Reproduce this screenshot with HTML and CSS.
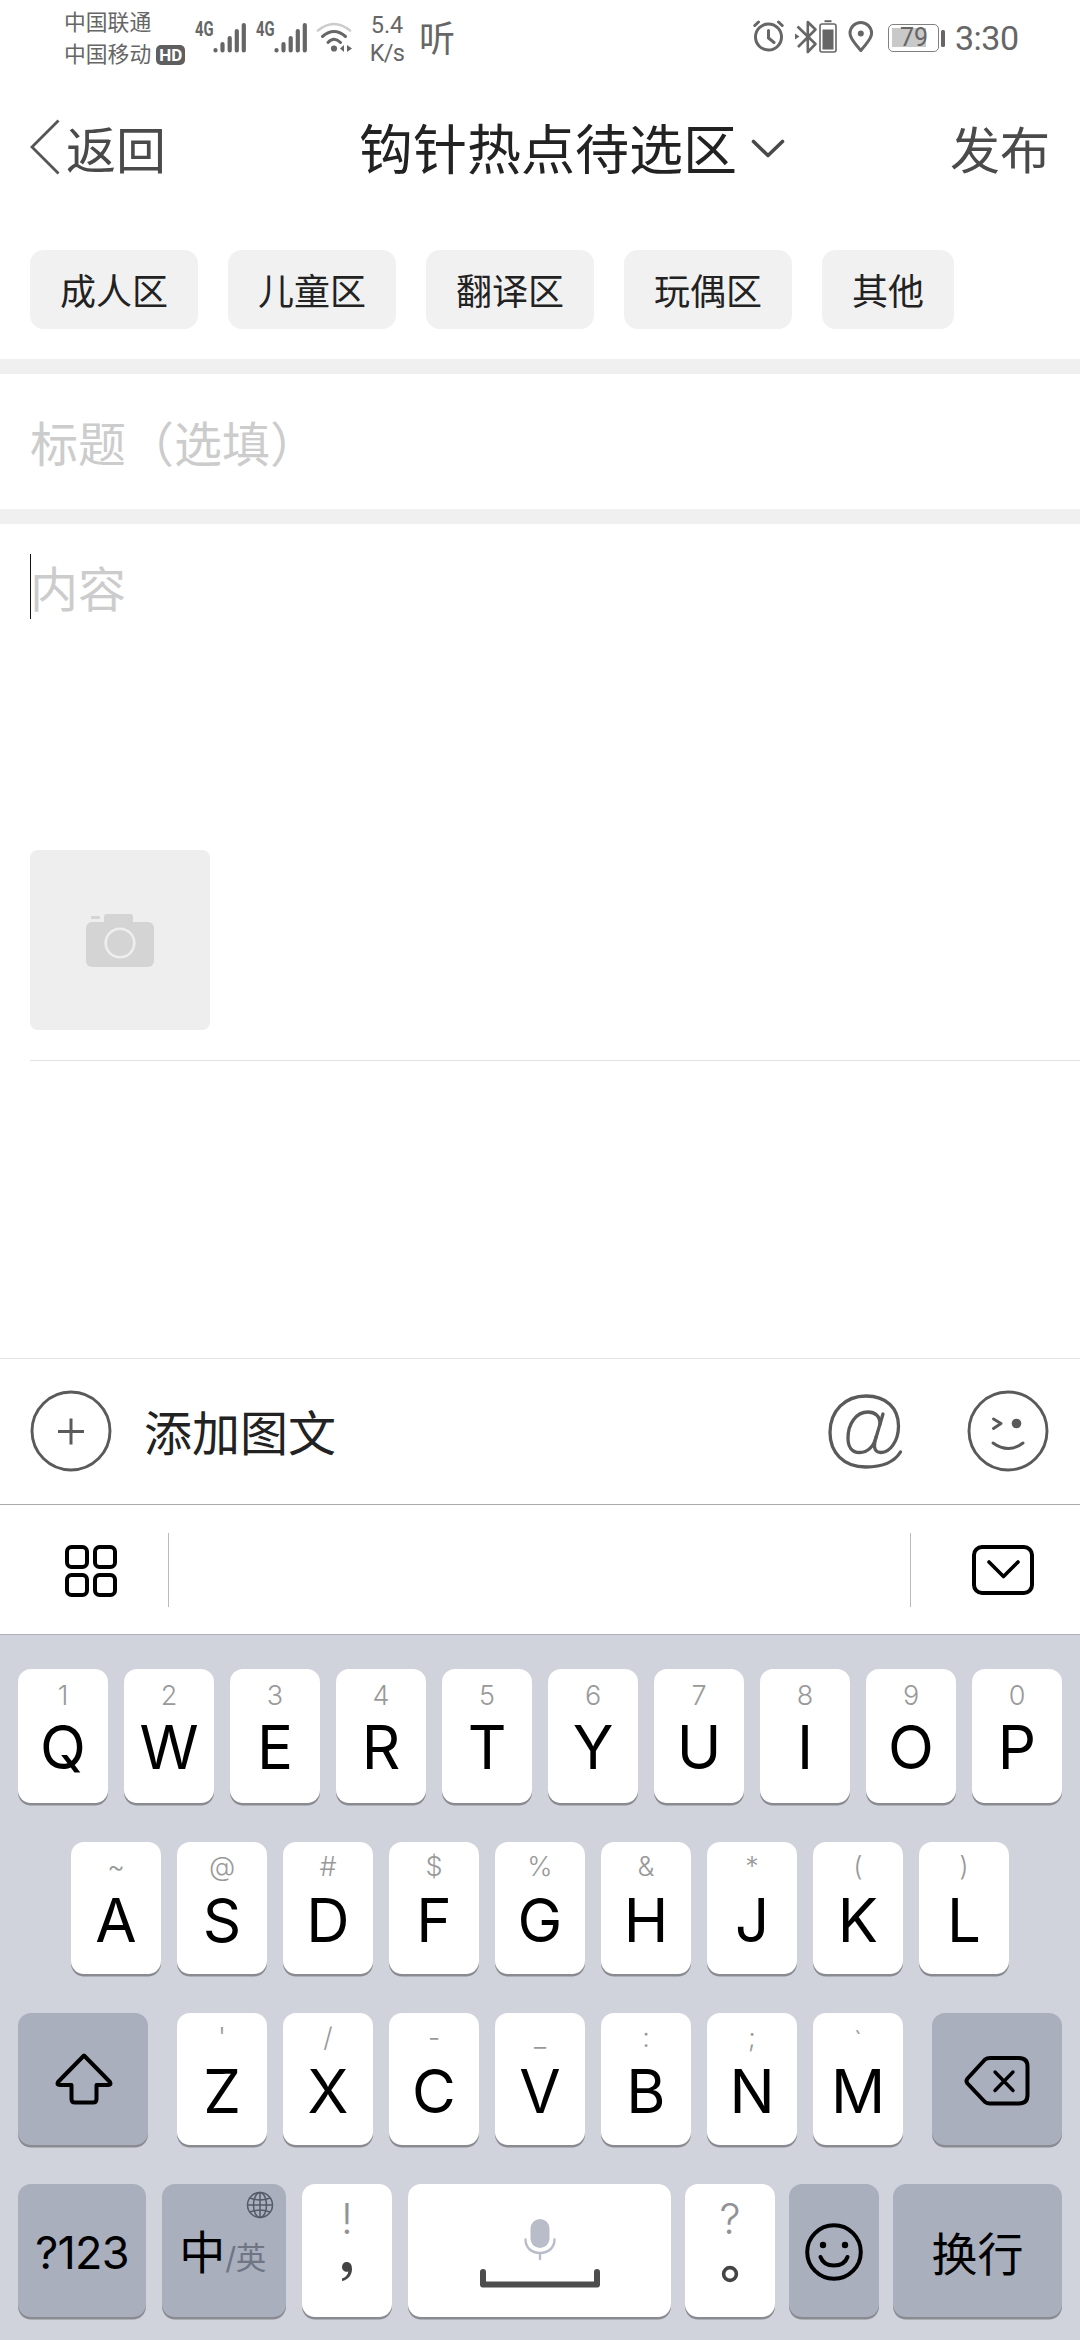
FILE: index.html
```html
<!DOCTYPE html>
<html lang="zh-CN">
<head>
<meta charset="utf-8">
<title>发布</title>
<link rel="stylesheet" href="styles.css">
</head>
<body>
<div class="screen">
  <div class="status">
    <div class="carriers">
      <div class="carrier">中国联通</div>
      <div class="carrier">中国移动<span class="hd">HD</span></div>
    </div>
    <div class="signal">
      <span class="gen">4G</span>
      <svg width="34" height="32" viewBox="0 0 34 32" stroke="#666" stroke-width="4.2" stroke-linecap="round"><path d="M2.5 28v.5M9.5 22v6.5M16.7 16v12.5M23.8 9v19.5M30.8 3v25.5"/></svg>
    </div>
    <div class="signal">
      <span class="gen">4G</span>
      <svg width="34" height="32" viewBox="0 0 34 32" stroke="#666" stroke-width="4.2" stroke-linecap="round"><path d="M2.5 28v.5M9.5 22v6.5M16.7 16v12.5M23.8 9v19.5M30.8 3v25.5"/></svg>
    </div>
    <svg class="wifi" width="38" height="32" viewBox="0 0 38 32" fill="none" stroke="#666" stroke-width="3" stroke-linecap="round">
      <path d="M2 8.500Q18 -4.500 34 8.500" stroke="#ccc" stroke-width="2.600"/>
      <path d="M6.500 14.500Q18 4.500 29.500 14.500M12 20.500Q18 14 24.500 20.500"/>
      <circle cx="18" cy="26.500" r="3.100" fill="#666" stroke="none"/>
      <path d="M24 26.500l4-3.500v7zM31 23v7l5-3.500z" fill="#666" stroke="none"/>
    </svg>
    <div class="speed"><div>5.4</div><div class="unit">K/s</div></div>
    <div class="listen">听</div>
    <svg class="alarm" width="32" height="32" viewBox="0 0 32 32" fill="none" stroke="#666" stroke-width="3" stroke-linecap="round">
      <circle cx="15.500" cy="17" r="13"/><path d="M15.500 10.500v7.500l5.500 4.500M1.800 5.500l3.700-3.500M29.200 5.500l-3.700-3.500"/>
    </svg>
    <svg class="bt" width="42" height="34" viewBox="0 0 42 34" fill="none" stroke="#666" stroke-width="2.600" stroke-linejoin="round">
      <path d="M2.500 6.500l18 17.500-7.700 8V2l7.700 7.500L3 27"/><path d="M0 13.500l4.500 3-4.500 3z" fill="#666" stroke="none"/>
      <rect x="25" y="4" width="16" height="28" rx="2" stroke-width="1.600"/><rect x="27.500" y="9.500" width="11" height="20" fill="#666" stroke="none"/><path d="M29.500 1.200h7" stroke-width="2"/>
    </svg>
    <svg class="pin" width="26" height="32" viewBox="0 0 26 32" fill="none" stroke="#666" stroke-width="3" stroke-linejoin="round">
      <path d="M12.800 29.500C8 23 2 18.500 2 12.300a10.800 10.800 0 0 1 21.600 0c0 6.200-6 10.700-10.800 17.200z"/><circle cx="12.800" cy="12.500" r="3" fill="#666" stroke="none"/>
    </svg>
    <div class="battery"><div class="cell">79</div><div class="cap"></div></div>
    <div class="clock">3:30</div>
  </div>

  <header class="nav">
    <div class="back">
      <svg width="30" height="56" viewBox="0 0 30 56" fill="none" stroke="#555" stroke-width="2.800"><path d="M28.500 1.500L2 28l26.500 26.500"/></svg>
      <span>返回</span>
    </div>
    <h1 class="heading">钩针热点待选区
      <svg width="34" height="20" viewBox="0 0 34 20" fill="none" stroke="#4a4a4a" stroke-width="3.600" stroke-linecap="round" stroke-linejoin="round"><path d="M2.500 2.500L17 16.500 31.500 2.500"/></svg>
    </h1>
    <div class="publish">发布</div>
  </header>

  <nav class="chips">
    <span class="chip">成人区</span><span class="chip">儿童区</span><span class="chip">翻译区</span><span class="chip">玩偶区</span><span class="chip">其他</span>
  </nav>
  <div class="band"></div>
  <div class="title-field">标题（选填）</div>
  <div class="band"></div>
  <main class="editor">
    <div class="content-field"><i class="caret"></i>内容</div>
    <div class="photo">
      <svg width="70" height="54" viewBox="0 0 70 54" fill="#d4d4d4"><rect x="1" y="9" width="68" height="45" rx="6"/><path d="M19 11V4q0-3 3-3h23q3 0 3 3v7z"/><rect x="6" y="3" width="9" height="3" rx="1"/><circle cx="35" cy="30" r="14.300" fill="none" stroke="#eee" stroke-width="2.600"/></svg>
    </div>
    <div class="rule"></div>
  </main>

  <div class="tools">
    <svg width="82" height="82" viewBox="0 0 82 82" fill="none" stroke="#5a5a5a" stroke-width="2.900"><circle cx="41" cy="41" r="39"/><path d="M28 41.500h26M41 28.500v26" stroke-width="3"/></svg>
    <span class="tools-label">添加图文</span>
    <svg class="mention" width="76" height="76" viewBox="0 0 76 76" fill="none" stroke="#5a5a5a" stroke-width="3.300" stroke-linecap="round" stroke-linejoin="round">
      <path d="M73.500 59C67 69.500 54 74 39 74 16 74 3 59 3 39.500 3 18 18 3 39 3 59 3 71.500 15 71.500 33 71.500 48 63 59.500 54 59.500 48 59.500 46.500 55 48 48L56 21"/>
      <path d="M53 31C53 23 48 19 41 19 29 19 21 31 21 45 21 54 25 59.500 32.500 59.500 41 59.500 47 53 49 44"/>
    </svg>
    <svg class="wink" width="82" height="82" viewBox="0 0 82 82" fill="none" stroke="#5a5a5a" stroke-width="2.900" stroke-linecap="round" stroke-linejoin="round"><circle cx="41" cy="41" r="39"/><path d="M26.500 29l7.500 4.500-7.500 5M26 53q15.500 11 30 0"/><circle cx="49.500" cy="33.500" r="4.800" fill="#5a5a5a" stroke="none"/></svg>
  </div>

  <div class="ime-bar">
    <svg class="grid-icon" width="54" height="54" viewBox="0 0 54 54" fill="none" stroke="#000" stroke-width="4"><rect x="3" y="3" width="20" height="20" rx="4.500"/><rect x="31" y="3" width="20" height="20" rx="4.500"/><rect x="3" y="31" width="20" height="20" rx="4.500"/><rect x="31" y="31" width="20" height="20" rx="4.500"/></svg>
    <div class="candidates"></div>
    <svg class="hide-icon" width="64" height="52" viewBox="0 0 64 52" fill="none" stroke="#000" stroke-width="4" stroke-linecap="round" stroke-linejoin="round"><rect x="3" y="3" width="58" height="46" rx="8"/><path d="M18 18l14.500 14.500L47 18" stroke-width="3.600"/></svg>
  </div>

  <div class="keyboard">
    <div class="row r1">
      <div class="key"><i>1</i><b>Q</b></div><div class="key"><i>2</i><b>W</b></div><div class="key"><i>3</i><b>E</b></div><div class="key"><i>4</i><b>R</b></div><div class="key"><i>5</i><b>T</b></div><div class="key"><i>6</i><b>Y</b></div><div class="key"><i>7</i><b>U</b></div><div class="key"><i>8</i><b>I</b></div><div class="key"><i>9</i><b>O</b></div><div class="key"><i>0</i><b>P</b></div>
    </div>
    <div class="row r2">
      <div class="key"><i>~</i><b>A</b></div><div class="key"><i>@</i><b>S</b></div><div class="key"><i>#</i><b>D</b></div><div class="key"><i>$</i><b>F</b></div><div class="key"><i>%</i><b>G</b></div><div class="key"><i>&amp;</i><b>H</b></div><div class="key"><i>*</i><b>J</b></div><div class="key"><i>(</i><b>K</b></div><div class="key"><i>)</i><b>L</b></div>
    </div>
    <div class="row r3">
      <div class="key fn shift"><svg width="60" height="54" viewBox="0 0 60 54" fill="none" stroke="#000" stroke-width="4" stroke-linejoin="round"><path d="M30 3.500L56 30Q58 33 54 33H42.500v14q0 3.500-3.500 3.500H21q-3.500 0-3.500-3.500V33H6Q2 33 4 30z"/></svg></div>
      <div class="key"><i>'</i><b>Z</b></div><div class="key"><i>/</i><b>X</b></div><div class="key"><i>-</i><b>C</b></div><div class="key"><i>_</i><b>V</b></div><div class="key"><i>:</i><b>B</b></div><div class="key"><i>;</i><b>N</b></div><div class="key"><i class="tick">`</i><b>M</b></div>
      <div class="key fn delete"><svg width="68" height="52" viewBox="0 0 68 52" fill="none" stroke="#000" stroke-width="4" stroke-linecap="round" stroke-linejoin="round"><path d="M22 4.500Q24 3 27 3H56q8.500 0 8.500 8.500V40q0 8.500-8.500 8.500H27q-3 0-5-1.500L4.500 28.500q-2-2.500 0-5z"/><path d="M32 17l18 18.500M50 17L32 35.500" stroke-width="3.400"/></svg></div>
    </div>
    <div class="row r4">
      <div class="key fn k-num">?123</div>
      <div class="key fn k-lang">
        <svg class="globe" width="28" height="28" viewBox="0 0 28 28" fill="none" stroke="#545b68" stroke-width="1.500"><circle cx="14" cy="14" r="12.500"/><ellipse cx="14" cy="14" rx="6.500" ry="12.500"/><path d="M14 1.500v25M1.500 14h25M4 7q10 4 20 0M4 21q10-4 20 0"/></svg>
        <span class="zh">中</span><span class="en">/英</span>
      </div>
      <div class="key k-punct"><i>!</i><svg width="14" height="22" viewBox="0 0 14 22" fill="#444"><path d="M6.500 1C10 1 12 3.500 12 8c0 6-4 11-10 12v-2.500c3.500-1 6-4 6.300-7-3 1-6.300-1-6.300-4.500C2 3 4 1 6.500 1z"/></svg></div>
      <div class="key k-space">
        <svg width="124" height="74" viewBox="0 0 124 74" fill="none" stroke-linecap="round" stroke-linejoin="round"><rect x="52.500" y="3" width="19" height="29" rx="9.500" fill="#b9bdc9"/><path d="M47.500 23.500c0 8 6 13.500 14.500 13.500s14.500-5.500 14.500-13.500M62 37v6" stroke="#b9bdc9" stroke-width="2.400"/><path d="M5 56v12.500h114V56" stroke="#4d4d4d" stroke-width="6"/></svg>
      </div>
      <div class="key k-punct"><i>?</i><svg width="18" height="18" viewBox="0 0 18 18" fill="none" stroke="#444" stroke-width="3.600"><circle cx="9" cy="9" r="6.400"/></svg></div>
      <div class="key fn k-smile"><svg width="60" height="60" viewBox="0 0 60 60" fill="none" stroke="#000" stroke-width="4" stroke-linecap="round"><circle cx="30" cy="30" r="26.800"/><path d="M16.500 35q3 8.500 13.500 8.500T43.500 35"/><g fill="#000" stroke="none"><circle cx="19" cy="23" r="3.200"/><circle cx="41" cy="23" r="3.200"/></g></svg></div>
      <div class="key fn k-enter">换行</div>
    </div>
  </div>
</div>
</body>
</html>
```
FILE: styles.css
```css
* { box-sizing: border-box; }
body {
  margin: 0;
  background: #fff;
  font-family: "Noto Sans CJK SC", sans-serif;
}
i, b { font-style: normal; font-weight: inherit; }
svg { display: block; flex: none; }
.screen {
  width: 1080px;
  height: 2340px;
  display: flex;
  flex-direction: column;
  overflow: hidden;
}

/* status bar */
.status {
  height: 76px;
  flex: none;
  display: flex;
  align-items: flex-start;
  color: #666;
}
.carriers { width: 124px; margin-left: 64px; padding-top: 5px; }
.carrier {
  display: flex;
  align-items: center;
  height: 32px;
  line-height: 32px;
  font-size: 21.800px;
  white-space: nowrap;
}
.hd {
  width: 29px;
  height: 20px;
  margin: 3px 0 0 5px;
  border-radius: 5px;
  background: #5f5f5f;
  color: #fff;
  font: 700 17px/20px Roboto, sans-serif;
  text-align: center;
}
.signal { display: flex; margin: 22px 0 0 7px; width: 54px; }
.signal svg { margin-left: -7px; }
.gen {
  width: 25px;
  font: 700 19.500px/15px Roboto, sans-serif;
  transform: scaleX(.76);
  transform-origin: left;
}
.wifi { margin: 22px 0 0 6px; }
.speed {
  width: 50px;
  margin: 12px 0 0 8px;
  font: 400 23.500px/27.500px Roboto, sans-serif;
  text-align: center;
}
.unit { letter-spacing: -.7px; }
.listen { width: 36px; margin: 18px 0 0 7px; font-size: 36px; line-height: 36px; }
.alarm { margin: 20px 0 0 298px; }
.bt { margin: 20px 0 0 10px; }
.pin { margin: 21px 0 0 11px; }
.battery { display: flex; align-items: center; margin: 24px 0 0 14px; }
.cell {
  width: 51px;
  height: 28px;
  padding-left: 11px;
  border: 1.600px solid #808080;
  border-radius: 5px;
  background: linear-gradient(#c9c9c9, #c9c9c9) 3px 3px / 34px 19px no-repeat;
  font: 400 25px/25px Roboto, sans-serif;
}
.cap { width: 4px; height: 17px; margin-left: 2px; border-radius: 1.500px; background: #666; }
.clock { margin: 18px 0 0 10px; font: 400 34px/40px Roboto, sans-serif; letter-spacing: -.5px; }

/* page header */
.nav {
  height: 142px;
  flex: none;
  display: grid;
  grid-template-columns: 329px 1fr 120px;
  align-items: center;
  padding: 0 30px;
  color: #4a4a4a;
  font-size: 50px;
  line-height: 72px;
}
.back { display: flex; align-items: center; }
.back span { margin-left: 6px; }
.heading {
  display: flex;
  align-items: center;
  gap: 14px;
  margin: 0;
  color: #222;
  font-size: 54px;
  font-weight: 400;
  white-space: nowrap;
}
.heading svg { margin-top: 3px; }
.publish { text-align: right; }

/* category chips */
.chips { display: flex; flex: none; gap: 30px; height: 141px; padding: 32px 30px 30px; }
.chip {
  padding: 0 30px;
  border-radius: 14px;
  background: #f1f1f1;
  color: #222;
  font-size: 36px;
  line-height: 79px;
}
.band { height: 15px; flex: none; background: #f0f0f0; }

/* editor */
.title-field { height: 135px; flex: none; padding-left: 30px; color: #ccc; font-size: 48px; line-height: 135px; }
.editor { height: 835px; flex: none; padding: 30px 0 0 30px; border-bottom: 1px solid #e3e3e3; }
.content-field { position: relative; height: 296px; color: #ccc; font-size: 48px; line-height: 65px; }
.caret { position: absolute; left: 0; top: 0; width: 1px; height: 65px; background: #111; }
.photo {
  width: 180px;
  height: 180px;
  display: flex;
  align-items: center;
  justify-content: center;
  border-radius: 8px;
  background: #eee;
}
.rule { height: 1px; margin-top: 30px; background: #e2e2e2; }
.tools {
  height: 146px;
  flex: none;
  display: flex;
  align-items: center;
  padding: 0 31px 1px 30px;
  border-bottom: 1px solid #aaa;
}
.tools-label { margin: -2px auto 0 32px; color: #222; font-size: 48px; }
.wink { margin-left: 64px; }

/* input method toolbar */
.ime-bar { height: 129px; flex: none; display: flex; align-items: center; }
.grid-icon { margin: 2px 50px 0 64px; }
.candidates { flex: 1; height: 74px; border: solid #bbb; border-width: 0 1px; }
.hide-icon { margin: 0 45px 0 60px; }

/* keyboard */
.keyboard {
  flex: 1;
  display: grid;
  grid-template-rows: 134px 132px 132px 133px;
  gap: 39px;
  padding: 34px 17px 0 18px;
  border-top: 1px solid #abb0bb;
  background: #d1d3dc;
  color: #000;
  font-family: Inter, "Noto Sans CJK SC", sans-serif;
}
.row { display: flex; gap: 16px; }
.r2 { padding-left: 53px; }
.key {
  position: relative;
  width: 90px;
  flex: none;
  display: flex;
  flex-direction: column;
  align-items: center;
  padding-top: 10px;
  border-radius: 13px;
  background: #fff;
  box-shadow: 0 2.500px 0 #898b91;
}
.key i { height: 30px; color: #999; font-size: 27px; font-weight: 300; line-height: 30px; }
.r1 .key i { line-height: 34px; }
.key .tick { line-height: 38px; }
.key b { margin-top: 8px; font-size: 60px; font-weight: 400; line-height: 60px; }
.key.fn {
  flex-direction: row;
  justify-content: center;
  padding: 0;
  background: #a9afbd;
}
.shift { width: 130px; margin-right: 13px; }
.shift svg { margin-left: 1px; }
.delete { width: 130px; margin-left: 13px; }
.delete svg { margin-top: 3px; }
.key.k-num { width: 128px; padding-top: 3px; font-size: 45px; font-weight: 400; letter-spacing: -.8px; }
.key.k-lang { width: 124px; align-items: baseline; padding: 35px 3px 0 0; }
.k-lang span { line-height: 66px; }
.globe { position: absolute; right: 12px; top: 7px; }
.zh { font-size: 46px; }
.en { color: #6f7583; font-size: 30.500px; letter-spacing: -.5px; }
.key.k-punct { justify-content: space-between; padding: 14px 0 34px; }
.key.k-punct i { height: 42px; font-size: 42px; line-height: 42px; color: #929296; }
.key.k-space { width: 263px; padding-top: 32px; }
.r4 .k-space + .k-punct { margin-left: -2px; }
.k-smile { margin-left: -2px; }
.k-smile svg { margin-top: 3px; }
.key.k-enter { width: 169px; margin-left: -2px; padding-top: 1px; font-size: 46px; }
```
